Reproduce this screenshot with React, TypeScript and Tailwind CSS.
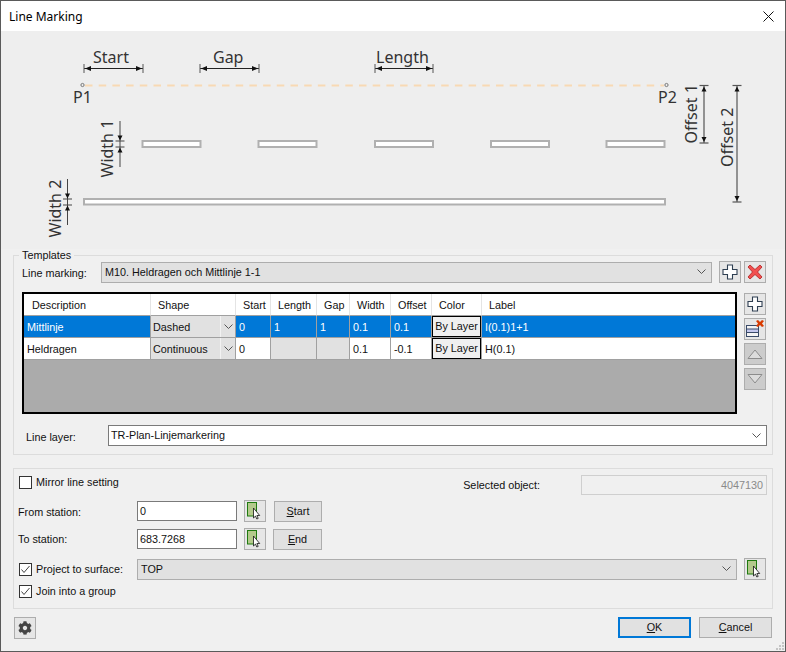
import type { ReactNode } from 'react'
import { FaCog } from 'react-icons/fa'

const ui = 'font-["Liberation_Sans",Arial,sans-serif] text-[10.8px] leading-[13px] text-[#111]'

function Chevron({ color = '#555' }: { color?: string }) {
  return (
    <svg width="9" height="6" viewBox="0 0 9 6" className="shrink-0">
      <polyline points="0.5,0.5 4.5,4.5 8.5,0.5" fill="none" stroke={color} strokeWidth="1" />
    </svg>
  )
}

function IconBtn({ children, disabled }: { children: ReactNode; disabled?: boolean }) {
  return (
    <button className={`flex h-[22px] w-[22px] shrink-0 items-center justify-center border border-[#adadad] ${disabled ? 'bg-[#cccccc]' : 'bg-[#e6e6e6]'}`}>
      {children}
    </button>
  )
}

function Plus() {
  return (
    <svg width="16" height="16" viewBox="0 0 16 16">
      <path d="M5.5 1h5v4.5H15v5h-4.5V15h-5v-4.5H1v-5h4.5z" fill="#fff" stroke="#2f3f52" strokeWidth="1.1" />
    </svg>
  )
}

function RedX() {
  return (
    <svg width="16" height="16" viewBox="0 0 16 16">
      <path d="M1 3l2-2 5 4.5L13 1l2 2-4.5 5 4.5 5-2 2-5-4.5L3 15l-2-2 4.5-5z" fill="#f25050" stroke="#b02020" strokeWidth="0.8" />
    </svg>
  )
}

function DeleteRow() {
  return (
    <svg width="20" height="20" viewBox="0 0 20 20">
      <rect x="1.5" y="6.5" width="12" height="11" fill="#f4f4f4" stroke="#3a4a68" />
      <rect x="2" y="10" width="11" height="3.5" fill="#c4c8ee" />
      <line x1="2" y1="10" x2="13" y2="10" stroke="#3a4a68" />
      <line x1="2" y1="13.5" x2="13" y2="13.5" stroke="#3a4a68" />
      <path d="M11 2l2-1 2 2 2-2 2 1-2 2.5 2 2.5-2 1-2-2-2 2-2-1 2-2.5z" fill="#d83b01" />
    </svg>
  )
}

function Triangle({ up }: { up?: boolean }) {
  return (
    <svg width="16" height="12" viewBox="0 0 16 12">
      <path d={up ? 'M1 10.5L8 2l7 8.5z' : 'M1 1.5L8 10l7-8.5z'} fill="#dcdcdc" stroke="#8c8c8c" strokeWidth="1" />
    </svg>
  )
}

function PickIcon() {
  return (
    <svg width="18" height="18" viewBox="0 0 18 18">
      <rect x="1.5" y="0.5" width="9" height="13.5" fill="#b3c98b" stroke="#1f7a10" strokeWidth="1" />
      <path d="M7.5 6v10l2-1.9 1.3 2.9 1.4-.6-1.3-2.9h2.8z" fill="#fff" stroke="#111" strokeWidth="0.8" />
    </svg>
  )
}

function Pick({ className = '' }: { className?: string }) {
  return (
    <button className={`flex h-[22px] w-[22px] shrink-0 items-center justify-center border border-[#adadad] bg-[#e6e6e6] ${className}`}>
      <PickIcon />
    </button>
  )
}

function Check({ checked }: { checked?: boolean }) {
  return (
    <span className="flex h-[13px] w-[13px] shrink-0 items-center justify-center border border-[#333] bg-white">
      {checked && (
        <svg width="11" height="11" viewBox="0 0 11 11">
          <polyline points="1.5,5.5 4,8.5 9.5,2" fill="none" stroke="#444" strokeWidth="1" />
        </svg>
      )}
    </span>
  )
}

function Combo({ value, className, white }: { value: string; className: string; white?: boolean }) {
  return (
    <div className={`flex h-[21px] items-center justify-between pr-[5px] ${white ? 'border border-[#7a7a7a] bg-white pl-[2px]' : 'border border-[#adadad] bg-[#e1e1e1] pl-[3px]'} ${className}`}>
      <span className={white ? '' : 'pt-[1px]'}>{value}</span>
      <Chevron />
    </div>
  )
}

function Diagram() {
  const label = { fontFamily: '"Noto Sans", "Open Sans", sans-serif', fontSize: 16, fill: '#333' }
  const arrowH = (x1: number, x2: number, y: number) => (
    <g stroke="#222" strokeWidth="1" fill="#111">
      <line x1={x1} y1={y} x2={x2} y2={y} />
      <line x1={x1} y1={y - 4.5} x2={x1} y2={y + 4.5} stroke="#555" />
      <line x1={x2} y1={y - 4.5} x2={x2} y2={y + 4.5} stroke="#555" />
      <path d={`M${x1 + 1} ${y}l6 -2.5v5z M${x2 - 1} ${y}l-6 -2.5v5z`} stroke="none" />
    </g>
  )
  const arrowV = (x: number, y1: number, y2: number, half: number) => (
    <g stroke="#555" strokeWidth="1.2" fill="#111">
      <line x1={x} y1={y1} x2={x} y2={y2} />
      <line x1={x - half} y1={y1} x2={x + half} y2={y1} />
      <line x1={x - half} y1={y2} x2={x + half} y2={y2} />
      <path d={`M${x} ${y1 + 1}l-2.5 5h5z M${x} ${y2 - 1}l-2.5 -5h5z`} stroke="none" />
    </g>
  )
  const widthDim = (x: number, y1: number, y2: number, top: number, bottom: number) => (
    <g stroke="#444" strokeWidth="1" fill="#111">
      <line x1={x} y1={top} x2={x} y2={bottom} />
      <line x1={x - 4.5} y1={y1} x2={x + 4.5} y2={y1} />
      <line x1={x - 4.5} y1={y2} x2={x + 4.5} y2={y2} />
      <path d={`M${x} ${y1 - 0.5}l-2.5 -5h5z M${x} ${y2 + 0.5}l-2.5 5h5z`} stroke="none" />
    </g>
  )
  const dashes = [142.5, 258.5, 375, 491, 606.5]

  return (
    <svg width="784" height="218" viewBox="1 31 784 218" className="block shrink-0 bg-[#eeeeee]">
      <text x="93" y="62.5" {...label}>Start</text>
      <text x="213" y="62.5" {...label}>Gap</text>
      <text x="376" y="62.5" {...label}>Length</text>
      {arrowH(84, 143, 68.5)}
      {arrowH(200, 259, 68.5)}
      {arrowH(375, 433, 68.5)}

      <line x1="85" y1="85.5" x2="664" y2="85.5" stroke="#f8d9b4" strokeWidth="2" strokeDasharray="7.5 6.2" />
      <circle cx="82.5" cy="85" r="1.6" fill="none" stroke="#777" />
      <circle cx="666.5" cy="85" r="1.6" fill="none" stroke="#777" />
      <text x="73" y="102.5" {...label}>P1</text>
      <text x="658" y="102.5" {...label}>P2</text>

      {dashes.map(x => (
        <rect key={x} x={x} y="141" width="58" height="6" fill="#fff" stroke="#b0b0b0" strokeWidth="2" />
      ))}
      <rect x="84" y="199" width="581" height="5.5" fill="#fff" stroke="#b0b0b0" strokeWidth="2" />

      <text transform="translate(113 177.5) rotate(-90)" {...label}>Width 1</text>
      {widthDim(120, 141, 147, 121, 167)}
      <text transform="translate(60.5 237.5) rotate(-90)" {...label}>Width 2</text>
      {widthDim(67.5, 199, 205, 179, 225)}
      <text transform="translate(697 143.5) rotate(-90)" {...label}>Offset 1</text>
      {arrowV(704, 85.5, 143, 4.5)}
      <text transform="translate(733 167) rotate(-90)" {...label}>Offset 2</text>
      {arrowV(737, 85.5, 202, 4.5)}
    </svg>
  )
}

const columns = ['Description', 'Shape', 'Start', 'Length', 'Gap', 'Width', 'Offset', 'Color', 'Label']

const rows = [
  { name: 'Mittlinje', shape: 'Dashed', start: '0', length: '1', gap: '1', width: '0.1', offset: '0.1', label: 'I(0.1)1+1', selected: true },
  { name: 'Heldragen', shape: 'Continuous', start: '0', length: '', gap: '', width: '0.1', offset: '-0.1', label: 'H(0.1)', selected: false },
]

function Cell({ children, selected, blank, last }: { children?: ReactNode; selected: boolean; blank?: boolean; last?: boolean }) {
  const bg = blank ? 'bg-[#e1e1e1]' : selected ? 'bg-[#0078d7] text-white' : 'bg-white'
  return (
    <div className={`flex h-[22px] items-center border-b border-[#a0a0a0] pt-[1px] pl-[3px] ${last ? '' : 'border-r'} ${bg}`}>{children}</div>
  )
}

function LineTable() {
  return (
    <div className="h-[122px] w-[715px] shrink-0 border-2 border-black bg-[#ababab]">
      <div className="grid grid-cols-[127px_85px_35px_46px_33px_41px_41px_50px_1fr]">
        {columns.map((c, i) => (
          <div key={c} className={`flex h-[22px] items-center border-b border-[#a0a0a0] bg-white pt-[1px] ${i === 0 ? 'pl-[8px]' : 'pl-[7px]'} ${i < 8 ? 'border-r border-r-[#e4e4e4]' : ''}`}>
            {c}
          </div>
        ))}
        {rows.map(r => (
          <div key={r.name} className="contents">
            <Cell selected={r.selected}>{r.name}</Cell>
            <div className="flex h-[22px] items-stretch border-r border-b border-[#a0a0a0] bg-[#e1e1e1]">
              <span className="flex flex-1 items-center pt-[1px] pl-[2px]">{r.shape}</span>
              <span className="flex w-[15px] items-center justify-center border-l border-[#f2f2f2]">
                <Chevron />
              </span>
            </div>
            <Cell selected={r.selected}>{r.start}</Cell>
            <Cell selected={r.selected} blank={!r.length}>{r.length}</Cell>
            <Cell selected={r.selected} blank={!r.gap}>{r.gap}</Cell>
            <Cell selected={r.selected}>{r.width}</Cell>
            <Cell selected={r.selected}>{r.offset}</Cell>
            <div className="h-[22px] border-r border-b border-[#a0a0a0] bg-white">
              <div className="flex h-full items-center justify-center border border-black bg-[#f0f0f0] text-[#111]">By Layer</div>
            </div>
            <Cell selected={r.selected} last>{r.label}</Cell>
          </div>
        ))}
      </div>
    </div>
  )
}

export default function App() {
  return (
    <div className={`relative flex h-[652px] w-[786px] flex-col overflow-hidden border border-[#5a5a5a] bg-[#f0f0f0] ${ui}`}>
      <div className="flex h-[30px] shrink-0 items-center justify-between bg-white pr-[11px] pl-[8px]">
        <span className='font-["Noto_Sans",sans-serif] text-[12px] text-black'>Line Marking</span>
        <svg width="11" height="11" viewBox="0 0 11 11">
          <path d="M0.5 0.5l10 10M10.5 0.5l-10 10" stroke="#111" strokeWidth="1" />
        </svg>
      </div>

      <Diagram />

      <fieldset className="mx-[12px] w-[760px] shrink-0 border border-[#dcdcdc] pb-[8px]">
        <legend className="ml-[5px] h-[12px] px-[3px] text-[10.8px] leading-[12px]">Templates</legend>
        <div className="flex items-center pl-[8px]">
          <span className="w-[79px] pt-[2px]">Line marking:</span>
          <Combo value="M10. Heldragen och Mittlinje 1-1" className="w-[611px]" />
          <span className="ml-[7px]"><IconBtn><Plus /></IconBtn></span>
          <span className="ml-[3px]"><IconBtn><RedX /></IconBtn></span>
        </div>
        <div className="mt-[9px] flex pl-[8px]">
          <LineTable />
          <div className="ml-[7px] flex flex-col gap-[3px] pt-[1px]">
            <IconBtn><Plus /></IconBtn>
            <IconBtn><DeleteRow /></IconBtn>
            <IconBtn disabled><Triangle up /></IconBtn>
            <IconBtn disabled><Triangle /></IconBtn>
          </div>
        </div>
        <div className="mt-[11px] flex items-center pl-[12px]">
          <span className="w-[82px] pt-[4px]">Line layer:</span>
          <Combo value="TR-Plan-Linjemarkering" className="w-[659px]" white />
        </div>
      </fieldset>

      <div className="mx-[12px] mt-[13px] h-[141px] w-[760px] shrink-0 border border-[#dcdcdc]">
        <div className="mt-[6px] flex h-[20px] items-start justify-between pr-[5px] pl-[5px]">
          <label className="mt-[1px] flex items-center gap-[4px]"><Check /><span>Mirror line setting</span></label>
          <div className="flex items-center">
            <span className="mr-[41px]">Selected object:</span>
            <div className="flex h-[20px] w-[186px] items-center justify-end border border-[#cfcfcf] bg-[#f0f0f0] pr-[3px] text-[#8a8a8a]">4047130</div>
          </div>
        </div>
        <div className="mt-[5px] flex items-center pl-[4px]">
          <span className="w-[119px] pt-[2px]">From station:</span>
          <div className="flex h-[20px] w-[100px] items-center border border-[#7a7a7a] bg-white pl-[2px]">0</div>
          <Pick className="ml-[7px]" />
          <button className="ml-[8px] h-[21px] w-[48px] border border-[#adadad] bg-[#e1e1e1]"><u>S</u>tart</button>
        </div>
        <div className="mt-[6px] flex items-center pl-[4px]">
          <span className="w-[119px]">To station:</span>
          <div className="flex h-[20px] w-[100px] items-center border border-[#7a7a7a] bg-white pl-[2px]">683.7268</div>
          <Pick className="ml-[7px]" />
          <button className="ml-[7px] h-[21px] w-[49px] border border-[#adadad] bg-[#e1e1e1]"><u>E</u>nd</button>
        </div>
        <div className="mt-[8px] flex items-center pl-[5px]">
          <label className="flex w-[118px] items-center gap-[4px]"><Check checked /><span>Project to surface:</span></label>
          <Combo value="TOP" className="w-[600px]" />
          <Pick className="ml-[7px]" />
        </div>
        <label className="mt-[5px] flex items-center gap-[4px] pl-[5px]"><Check checked /><span>Join into a group</span></label>
      </div>

      <div className="mt-[8px] flex items-start justify-between pr-[13px] pl-[13px]">
        <IconBtn><FaCog className="text-[14px] text-[#444]" /></IconBtn>
        <div className="flex gap-[8px]">
          <button className="h-[21px] w-[73px] border-2 border-[#0078d7] bg-[#e1e1e1]"><u>O</u>K</button>
          <button className="h-[21px] w-[73px] border border-[#adadad] bg-[#e1e1e1]"><u>C</u>ancel</button>
        </div>
      </div>

      <svg width="8" height="8" viewBox="0 0 8 8" className="absolute right-[1px] bottom-[1px]">
        <path d="M6 0h2v2H6zM3 3h2v2H3zM6 3h2v2H6zM0 6h2v2H0zM3 6h2v2H3zM6 6h2v2H6z" fill="#c4c4c4" />
      </svg>
    </div>
  )
}
